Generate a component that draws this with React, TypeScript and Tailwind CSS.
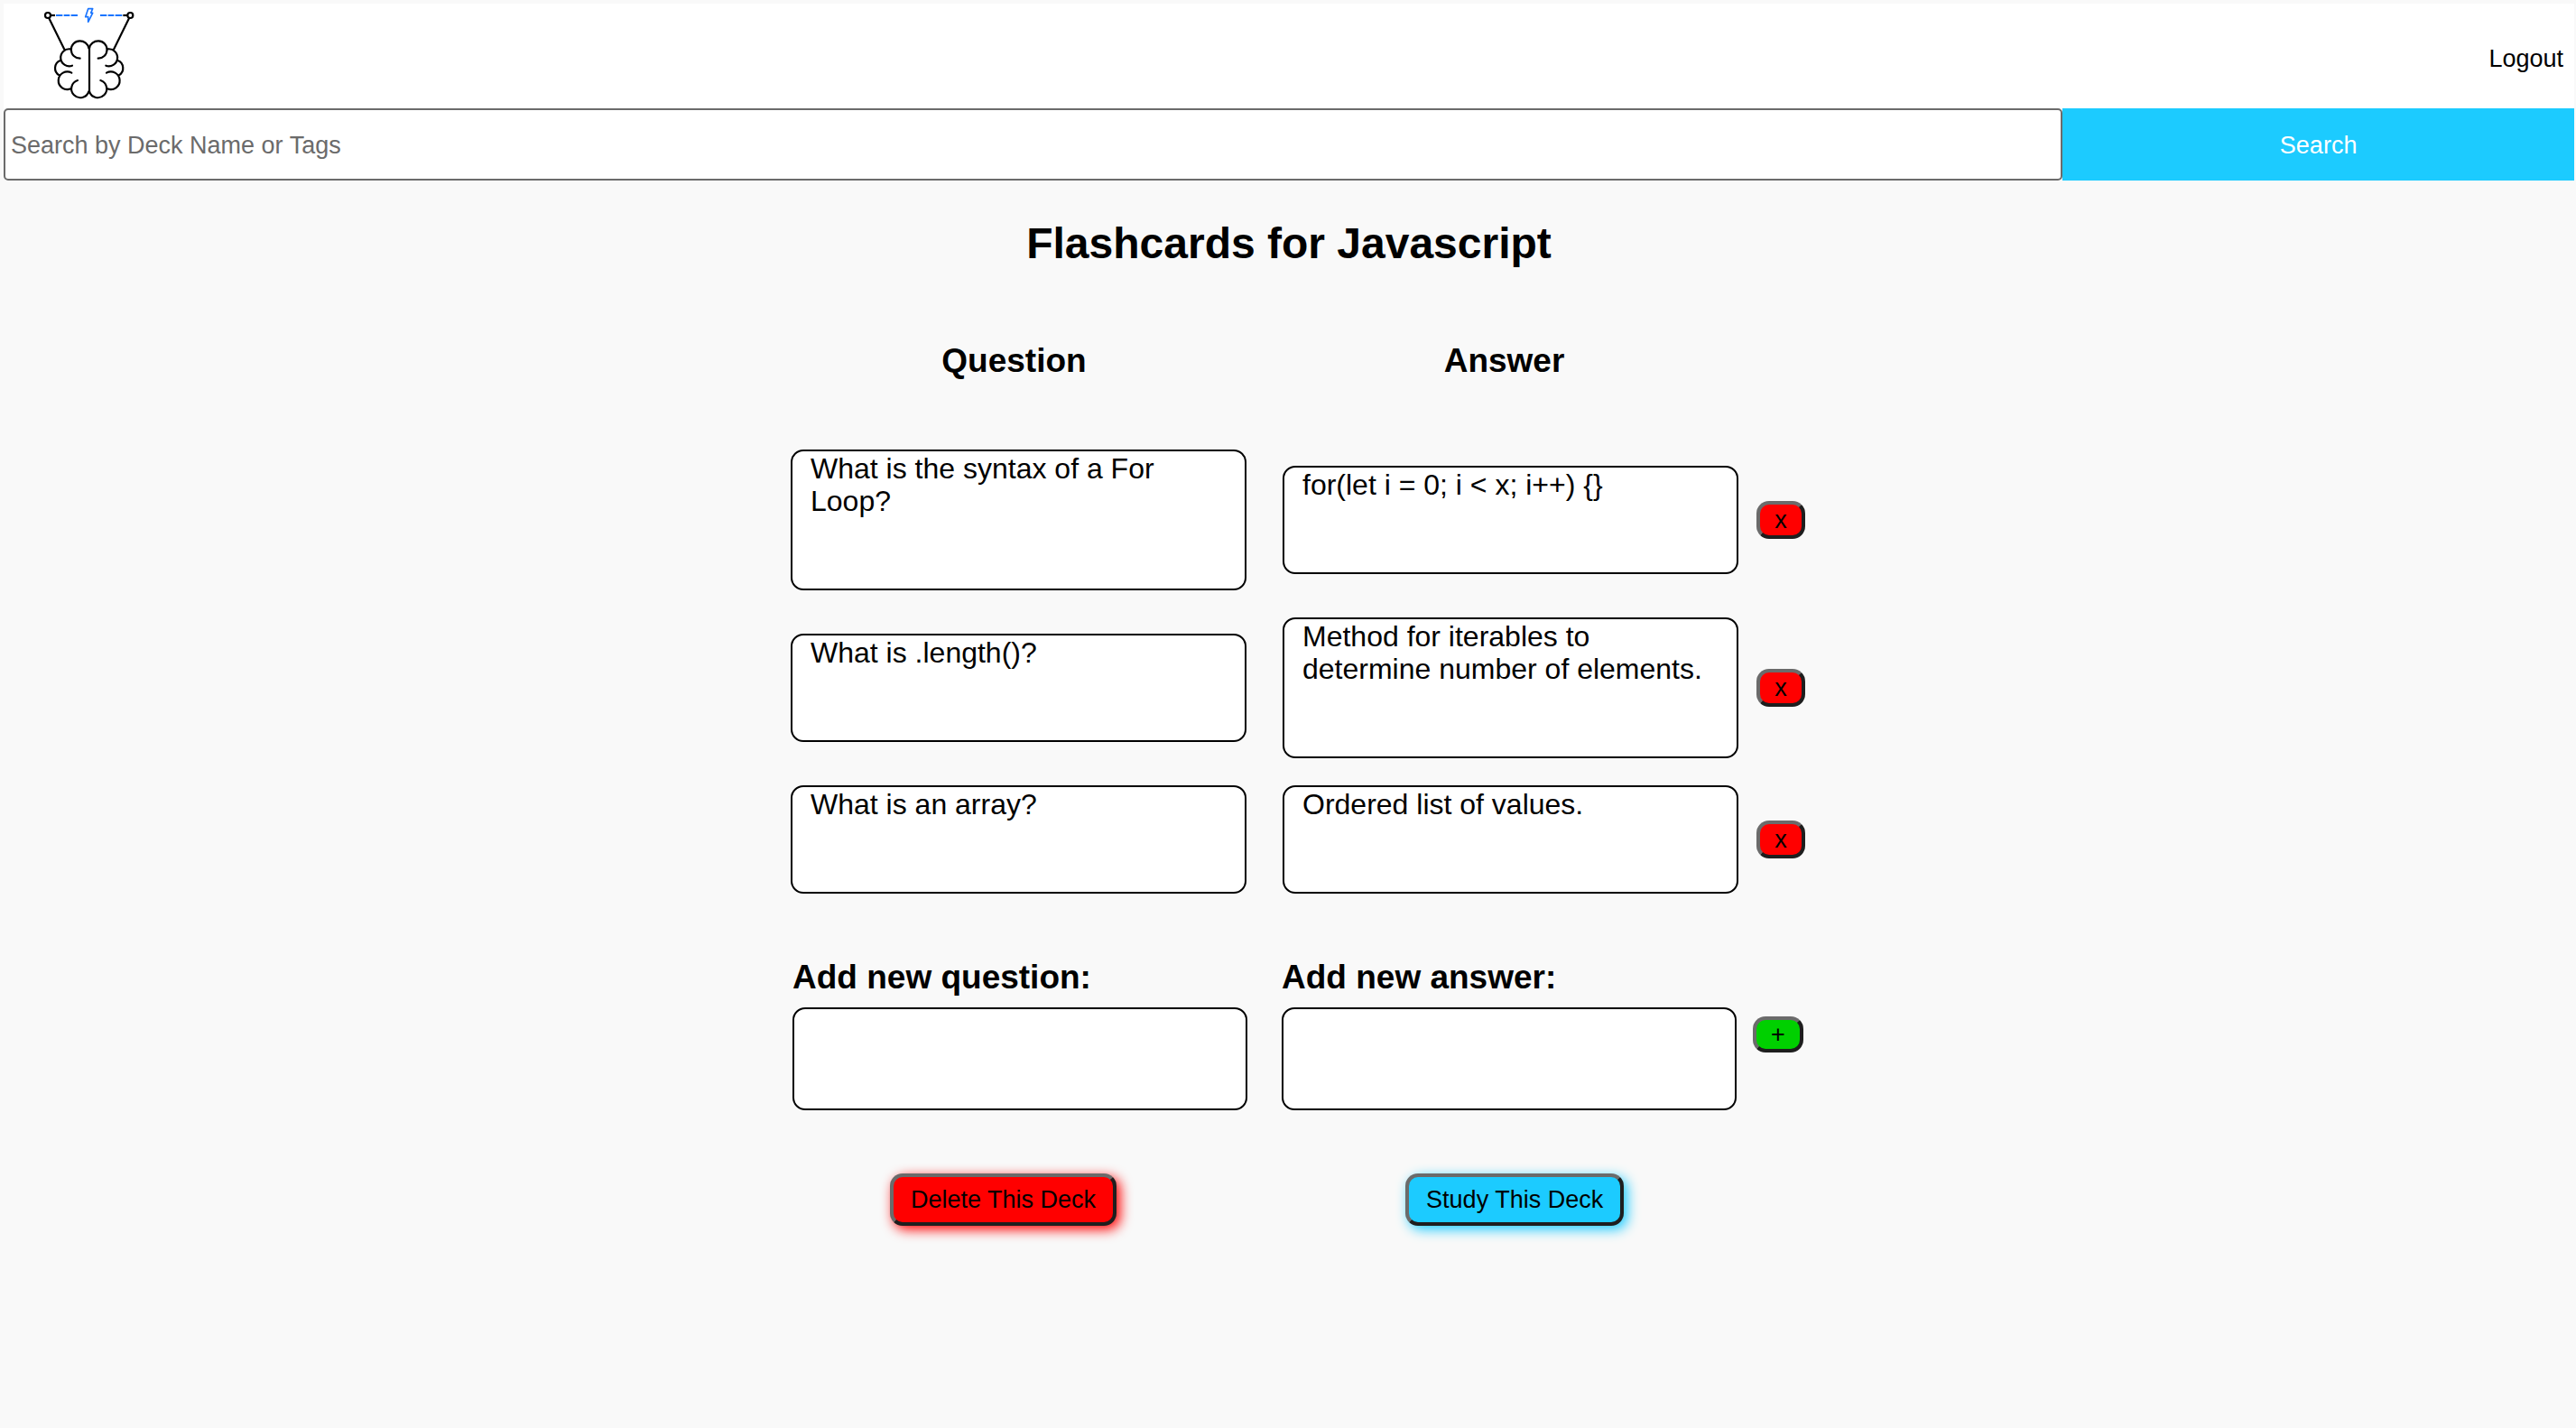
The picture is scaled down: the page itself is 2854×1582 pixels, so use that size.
import { useState } from "react";

type Card = { id: number; question: string; answer: string };

const initialCards: Card[] = [
  { id: 1, question: "What is the syntax of a For Loop?", answer: "for(let i = 0; i < x; i++) {}" },
  { id: 2, question: "What is .length()?", answer: "Method for iterables to determine number of elements." },
  { id: 3, question: "What is an array?", answer: "Ordered list of values." },
];

const raised =
  "shrink-0 cursor-pointer rounded-[14px] border-4 border-t-[#6b6b6b] border-r-[#1e1e1e] border-b-[#1e1e1e] border-l-[#6b6b6b] text-[27px] text-black";

const box = "min-w-0 flex-1 rounded-[14px] border-2 border-black bg-white px-5 pt-px text-[32px] leading-9";

function BrainHalf() {
  return (
    <>
      <path d="M207 160C209 146 222 136 237 136A29 29 0 1 1 236 194" />
      <path d="M268 163A28.5 28.5 0 1 1 262 218" />
      <path d="M301 201A27 27 0 0 1 305 250" />
      <path d="M264 242A29.5 29.5 0 1 1 267 295" />
      <path d="M244 267A29.5 29.5 0 1 1 207 304" />
      <path d="M288 164L339 61" />
      <circle cx="343" cy="51" r="9" />
      <path d="M334 51H319" strokeLinecap="butt" />
    </>
  );
}

function Logo() {
  return (
    <svg viewBox="0 12 420 348" className="h-[116px] w-[140px]" fill="none" role="img" aria-label="Home">
      <g stroke="#000" strokeWidth="6.5" strokeLinecap="round" strokeLinejoin="round">
        <BrainHalf />
        <g transform="matrix(-1 0 0 1 412 0)">
          <BrainHalf />
        </g>
        <path d="M207 156V308" />
      </g>
      <g stroke="#1a75ff" strokeWidth="6">
        <path d="M96 51H118M122 51H142M146 51H168" />
        <path d="M243 51H265M269 51H289M293 51H316" />
        <path d="M203 29H218L212 43H218L203 73V56H194Z" strokeWidth="5" strokeLinejoin="round" />
      </g>
    </svg>
  );
}

export default function App() {
  const [cards, setCards] = useState(initialCards);
  const [question, setQuestion] = useState("");
  const [answer, setAnswer] = useState("");

  const addCard = () => {
    if (!question || !answer) return;
    setCards([...cards, { id: Date.now(), question, answer }]);
    setQuestion("");
    setAnswer("");
  };

  return (
    <div className="min-h-screen bg-[#f9f9f9] pt-1 pr-[2px] pl-1 font-['Liberation_Sans',Arial,sans-serif] text-black">
      <header>
        <nav className="flex items-center justify-between bg-white pr-3 pl-[26px]">
          <a href="#home">
            <Logo />
          </a>
          <a href="#logout" className="pt-1.5 text-[27px] leading-8">
            Logout
          </a>
        </nav>
        <form className="flex h-20" onSubmit={(e) => e.preventDefault()}>
          <input
            type="search"
            aria-label="Search by Deck Name or Tags"
            placeholder="Search by Deck Name or Tags"
            className="min-w-0 flex-1 rounded-[5px] border-2 border-[#6b6b6b] bg-white px-1.5 pt-0.5 text-[27px] placeholder:text-[#6b6b6b]"
          />
          <button type="submit" className="w-[19.9%] cursor-pointer bg-[#1ccbff] pt-0.5 text-[27px] text-white">
            Search
          </button>
        </form>
      </header>

      <main className="mx-auto max-w-[1148px] pt-[42px] pb-16">
        <h1 className="text-center text-[48px] leading-[56px] font-bold">Flashcards for Javascript</h1>

        <div className="mt-[81px] flex gap-10 pr-[84px] pl-[18px] text-center text-[37px] leading-[42px] font-bold">
          <h2 className="flex-1">Question</h2>
          <h2 className="flex-1">Answer</h2>
        </div>

        <ul className="mt-[77px] flex flex-col gap-[30px] pr-[2px] pl-[22px]">
          {cards.map((card) => (
            <li key={card.id} className="flex items-center gap-5">
              <div className="flex min-w-0 flex-1 items-center gap-10">
                <p className={`${box} pb-[79px]`}>{card.question}</p>
                <p className={`${box} pb-[79px]`}>{card.answer}</p>
              </div>
              <button
                type="button"
                aria-label={`Delete card: ${card.question}`}
                className={`${raised} h-[42px] w-[54px] bg-[#ff0000] leading-[34px]`}
                onClick={() => setCards(cards.filter((c) => c.id !== card.id))}
              >
                x
              </button>
            </li>
          ))}
        </ul>

        <div className="mt-[72px] flex items-start gap-[18px] pr-1 pl-6">
          <div className="flex min-w-0 flex-1 gap-[38px]">
            <div className="flex min-w-0 flex-1 flex-col gap-3">
              <label htmlFor="new-question" className="text-[37px] leading-[42px] font-bold">
                Add new question:
              </label>
              <textarea
                id="new-question"
                rows={3}
                value={question}
                onChange={(e) => setQuestion(e.target.value)}
                className={`${box} h-[114px] flex-none resize-none`}
              />
            </div>
            <div className="flex min-w-0 flex-1 flex-col gap-3">
              <label htmlFor="new-answer" className="text-[37px] leading-[42px] font-bold">
                Add new answer:
              </label>
              <textarea
                id="new-answer"
                rows={3}
                value={answer}
                onChange={(e) => setAnswer(e.target.value)}
                className={`${box} h-[114px] flex-none resize-none`}
              />
            </div>
          </div>
          <button
            type="button"
            aria-label="Add card"
            className={`${raised} mt-16 h-10 w-14 bg-[#00d000] leading-[30px]`}
            onClick={addCard}
          >
            +
          </button>
        </div>

        <div className="mt-[70px] flex gap-80 pl-[132px]">
          <button
            type="button"
            className={`${raised} h-[58px] bg-[#ff0000] px-[19px] shadow-[4px_4px_14px_#ff0000]`}
          >
            Delete This Deck
          </button>
          <button
            type="button"
            className={`${raised} h-[58px] bg-[#1ccbff] px-[19px] shadow-[4px_4px_14px_#1ccbff]`}
          >
            Study This Deck
          </button>
        </div>
      </main>
    </div>
  );
}
